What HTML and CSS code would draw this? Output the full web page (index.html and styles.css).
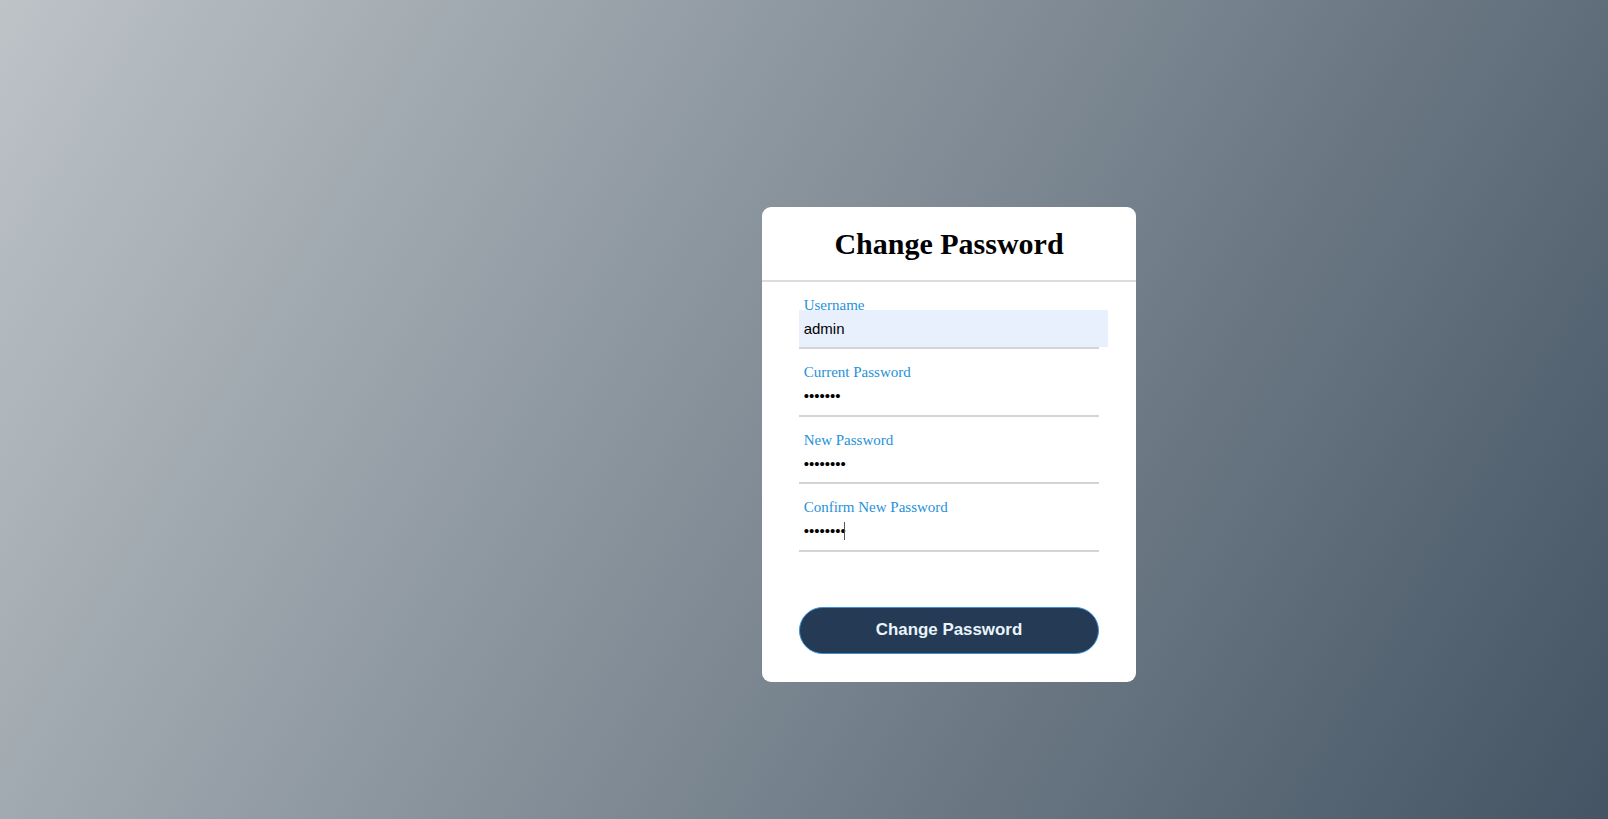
FILE: index.html
```html
<!DOCTYPE html>
<html lang="en">
<head>
<meta charset="utf-8">
<title>Change Password</title>
<link rel="stylesheet" href="styles.css">
</head>
<body>
  <div class="card">
    <h1 class="title">Change Password</h1>
    <form class="form">
      <div class="field">
        <input class="input input-autofill" type="text" value="admin">
        <label class="label">Username</label>
      </div>
      <div class="field">
        <input class="input" type="password" value="1234567">
        <label class="label">Current Password</label>
      </div>
      <div class="field">
        <input class="input" type="password" value="12345678">
        <label class="label">New Password</label>
      </div>
      <div class="field">
        <input class="input" type="password" value="12345678">
        <label class="label">Confirm New Password</label>
        <span class="caret"></span>
      </div>
      <button class="submit" type="button">Change Password</button>
    </form>
  </div>
</body>
</html>
```

FILE: styles.css
```css
html {
  min-height: 100%;
  background: linear-gradient(120deg, #bdc3c7 0%, #2c3e50 120%);
}

body {
  margin: 0;
  padding: 207px 0 0 762px;
  min-height: 100vh;
  box-sizing: border-box;
}

.card {
  width: 374px;
  background: #ffffff;
  border-radius: 9px;
  display: flow-root;
}

.title {
  margin: 20px 0 0;
  padding: 0 0 18.5px;
  text-align: center;
  font-family: "Liberation Serif", "Times New Roman", serif;
  font-weight: bold;
  font-size: 30px;
  color: #000;
  border-bottom: 2px solid #dcdcdc;
}

.form {
  padding: 0 37px;
  display: flow-root;
}

.field {
  position: relative;
  margin: 28px 0;
  border-bottom: 2px solid #d4d4d4;
}

.input {
  display: block;
  width: 100%;
  height: 37.5px;
  padding: 0 4.7px;
  border: none;
  outline: none;
  background: none;
  font-family: "Liberation Sans", Arial, sans-serif;
  font-size: 15px;
  color: #000;
}

.input-autofill {
  background: #e8f0fe;
}

.label {
  position: absolute;
  left: 4.7px;
  top: -4.7px;
  transform: translateY(-50%);
  font-family: "Liberation Serif", "Times New Roman", serif;
  font-size: 15px;
  color: #2691d9;
  pointer-events: none;
}

.caret {
  position: absolute;
  left: 45px;
  top: 10px;
  width: 1px;
  height: 18px;
  background: #555;
}

.submit {
  display: block;
  width: 100%;
  height: 47px;
  margin: 55px 0 28px;
  box-sizing: border-box;
  border: 1px solid #3b8fd4;
  border-radius: 23.5px;
  background: #243a55;
  font-family: "Liberation Sans", Arial, sans-serif;
  font-weight: bold;
  font-size: 16.9px;
  color: #e9f4fb;
  cursor: pointer;
}
```
